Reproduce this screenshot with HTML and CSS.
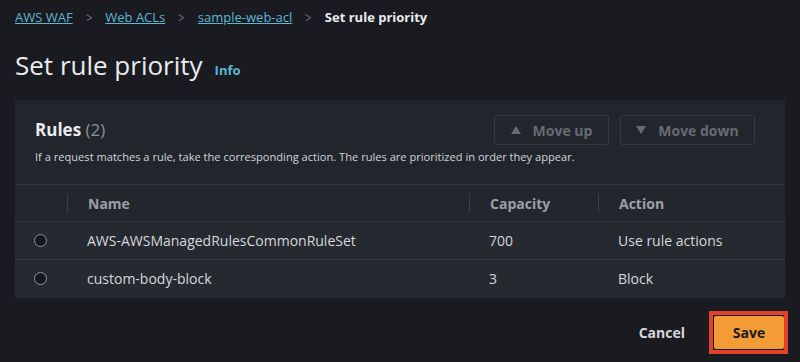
FILE: index.html
```html
<!DOCTYPE html>
<html lang="en">
<head>
    <meta charset="UTF-8">
    <title>Set rule priority</title>
    <link rel="stylesheet" href="styles.css">
</head>
<body>
    <!-- Breadcrumbs -->
    <nav class="crumbs">
        <a href="#">AWS WAF</a>
        <span class="sep">&gt;</span>
        <a href="#">Web ACLs</a>
        <span class="sep">&gt;</span>
        <a href="#">sample-web-acl</a>
        <span class="sep">&gt;</span>
        <span class="current">Set rule priority</span>
    </nav>

    <div class="page-title">
        <h1>Set rule priority</h1>
        <a href="#" class="info">Info</a>
    </div>

    <div class="card">
        <div class="card-head">
            <div class="head-row">
                <h2>Rules <span class="count">(2)</span></h2>
                <div class="actions">
                    <button class="btn-move up" disabled>
                        <svg class="tri" width="10" height="8" viewBox="0 0 10 8"><polygon points="5,0 10,8 0,8" fill="currentColor"/></svg>
                        Move up
                    </button>
                    <button class="btn-move down" disabled>
                        <svg class="tri" width="10" height="8" viewBox="0 0 10 8"><polygon points="0,0 10,0 5,8" fill="currentColor"/></svg>
                        Move down
                    </button>
                </div>
            </div>
            <p>If a request matches a rule, take the corresponding action. The rules are prioritized in order they appear.</p>
        </div>

        <table class="rules">
            <thead>
                <tr>
                    <th class="col-radio"></th>
                    <th class="col-name"><span>Name</span></th>
                    <th class="col-cap"><span>Capacity</span></th>
                    <th class="col-action"><span>Action</span></th>
                </tr>
            </thead>
            <tbody>
                <tr>
                    <td class="col-radio"><span class="radio"></span></td>
                    <td>AWS-AWSManagedRulesCommonRuleSet</td>
                    <td>700</td>
                    <td>Use rule actions</td>
                </tr>
                <tr>
                    <td class="col-radio"><span class="radio"></span></td>
                    <td>custom-body-block</td>
                    <td>3</td>
                    <td>Block</td>
                </tr>
            </tbody>
        </table>
    </div>

    <div class="footer">
        <button class="btn-cancel">Cancel</button>
        <div class="highlight">
            <button class="btn-save">Save</button>
        </div>
    </div>
</body>
</html>
```

FILE: styles.css
```css
body {
    margin: 0;
    padding: 0 15px;
    background: #1a1b20;
    font-family: 'Open Sans', sans-serif;
    color: #d1d5db;
    height: 362px;
    overflow: hidden;
}
.crumbs {
    display: flex;
    align-items: center;
    height: 33px;
    font-size: 13px;
    gap: 12px;
}
.crumbs a {
    color: #5cb6d4;
    text-decoration: underline;
}
.crumbs .sep {
    color: #6c7079;
    font-size: 15px;
    transform: scaleX(0.75);
}
.crumbs .current {
    color: #e9ebed;
    font-weight: 700;
}
.page-title {
    display: flex;
    align-items: baseline;
    gap: 12px;
    height: 67px;
    padding-top: 14px;
    box-sizing: border-box;
}
.page-title h1 {
    margin: 0;
    font-size: 26px;
    font-weight: 400;
    color: #e9ebed;
    line-height: 36px;
}
.info {
    color: #5cb6d4;
    font-size: 13px;
    font-weight: 700;
    text-decoration: none;
}
.card {
    background: #22252b;
}
.card-head {
    padding: 15px 30px 0 20px;
    height: 84px;
    box-sizing: border-box;
}
.head-row {
    display: flex;
    justify-content: space-between;
}
.card-head h2 {
    margin: 0;
    font-size: 17px;
    font-weight: 700;
    color: #e9ebed;
    line-height: 30px;
}
.card-head .count {
    color: #8d9199;
    font-weight: 400;
}
.card-head p {
    margin: 4px 0 0;
    font-size: 11.1px;
    color: #d1d5db;
    white-space: nowrap;
}
.actions {
    display: flex;
    gap: 11px;
}
.btn-move {
    height: 30px;
    padding: 0;
    background: #22252b;
    border: 1px solid #363940;
    border-radius: 3px;
    color: #676b73;
    font-family: inherit;
    font-size: 14px;
    font-weight: 700;
    white-space: nowrap;
    display: flex;
    align-items: center;
    justify-content: center;
}
.btn-move.up {
    width: 115px;
}
.btn-move.down {
    width: 135px;
}
.tri {
    margin-right: 12px;
}
.rules {
    width: 100%;
    border-collapse: collapse;
    table-layout: fixed;
    font-size: 14px;
}
.rules thead tr {
    border-top: 1px solid #32353c;
    height: 37px;
    background: #23262d;
}
.rules th {
    text-align: left;
    font-weight: 700;
    color: #9ba0a8;
    padding: 0;
}
.rules th span {
    display: block;
    border-left: 1px solid #3a3d44;
    padding-left: 20px;
    line-height: 19px;
}
.col-radio {
    width: 52px;
}
.col-name {
    width: 402px;
}
.col-cap {
    width: 129px;
}
.rules tbody tr {
    height: 38px;
    background: #26292f;
    border-top: 1px solid #34373e;
}
.rules td {
    padding: 0 0 0 20px;
    color: #d5d8dc;
}
.rules td.col-radio {
    padding-left: 19px;
}
.radio {
    display: block;
    width: 11px;
    height: 11px;
    border: 1.5px solid #8d9199;
    border-radius: 50%;
    background: #16181d;
}
.footer {
    display: flex;
    justify-content: flex-end;
    align-items: center;
    gap: 24px;
    margin-top: 13px;
    margin-right: -3px;
}
.btn-cancel {
    background: none;
    border: none;
    padding: 0;
    color: #d5d8dc;
    font-family: inherit;
    font-size: 14px;
    font-weight: 700;
}
.highlight {
    border: 4px solid #e3412b;
    padding: 1px 0 1px 1px;
    background: #1a1b20;
}
.btn-save {
    display: block;
    width: 70px;
    height: 33px;
    background: #f39c37;
    border: none;
    border-radius: 2px;
    color: #1a1b20;
    font-family: inherit;
    font-size: 14px;
    font-weight: 700;
}
```
